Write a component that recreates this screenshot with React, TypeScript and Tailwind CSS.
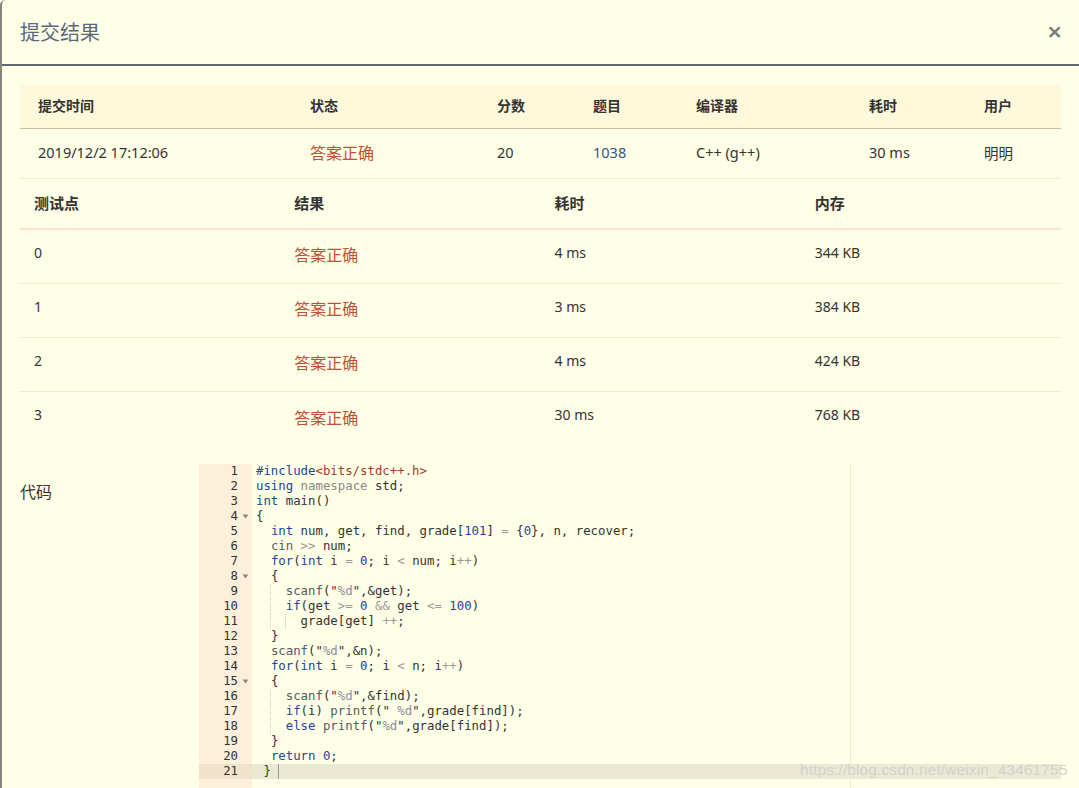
import React from 'react';

const CH = 7.43;

const codeLines = [
  '#include<bits/stdc++.h>',
  'using namespace std;',
  'int main()',
  '{',
  '  int num, get, find, grade[101] = {0}, n, recover;',
  '  cin >> num;',
  '  for(int i = 0; i < num; i++)',
  '  {',
  '    scanf("%d",&get);',
  '    if(get >= 0 && get <= 100)',
  '      grade[get] ++;',
  '  }',
  '  scanf("%d",&n);',
  '  for(int i = 0; i < n; i++)',
  '  {',
  '    scanf("%d",&find);',
  '    if(i) printf(" %d",grade[find]);',
  '    else printf("%d",grade[find]);',
  '  }',
  '  return 0;',
  ' } ',
];

const folds = [4, 8, 15];

const TOKEN =
  /(#include)|(<bits\/stdc\+\+\.h>)|("[^"]*")|\b(int|for|if|else|return|using)\b|\b(namespace)\b|\b(scanf|printf|cin)\b|\b(\d+)\b|(>>|>=|<=|&&|\+\+|=|<)|([^\s"]+?(?=[\s"#<>=&+]|$|\b)|\s+|.)/g;

function renderLine(line: string) {
  const out: React.ReactNode[] = [];
  let m: RegExpExecArray | null;
  let k = 0;
  TOKEN.lastIndex = 0;
  while ((m = TOKEN.exec(line)) !== null) {
    if (m[0] === '') {
      TOKEN.lastIndex++;
      continue;
    }
    const t = m[0];
    if (m[1] || m[4]) out.push(<span key={k++} className="text-[#23449b]">{t}</span>);
    else if (m[2]) out.push(<span key={k++} className="text-[#a33c2c]">{t}</span>);
    else if (m[3]) {
      out.push(
        <span key={k++}>
          "<span className="text-[#8d8da0]">{t.slice(1, -1)}</span>"
        </span>
      );
    } else if (m[5]) out.push(<span key={k++} className="text-[#8a8a8a]">{t}</span>);
    else if (m[6]) out.push(<span key={k++} className="text-[#555a63]">{t}</span>);
    else if (m[7]) out.push(<span key={k++} className="text-[#2c3aa6]">{t}</span>);
    else if (m[8]) out.push(<span key={k++} className="text-[#9a9a9a]">{t}</span>);
    else out.push(<span key={k++}>{t}</span>);
  }
  return out;
}

function guides(line: string) {
  const indent = line.length - line.trimStart().length;
  const g: number[] = [];
  for (let c = 2; c <= indent - 2; c += 2) g.push(c);
  return g;
}

function FoldArrow() {
  return (
    <svg width="7" height="5" viewBox="0 0 7 5" className="absolute right-[3px] top-[5px]">
      <path d="M0.5 0.5 L6.5 0.5 L3.5 4.5 Z" fill="#8c8c8c" />
    </svg>
  );
}

export default function App() {
  const summaryCols = ['提交时间', '状态', '分数', '题目', '编译器', '耗时', '用户'];
  const cases = [
    { id: 0, time: '4 ms', mem: '344 KB' },
    { id: 1, time: '3 ms', mem: '384 KB' },
    { id: 2, time: '4 ms', mem: '424 KB' },
    { id: 3, time: '30 ms', mem: '768 KB' },
  ];

  return (
    <div className="relative w-[1079px] h-[788px] overflow-hidden bg-[#fffee6] border-l-2 border-[#85857c] rounded-tl-[5px] text-[#333] font-['Noto_Sans','Noto_Sans_CJK_SC',sans-serif]">
      {/* header */}
      <div className="flex items-center justify-between h-[66px] pl-[18px] pr-[17px] border-b-2 border-[#5d6a70]">
        <h4 className="text-[20px] text-[#5a6a7e] font-['Noto_Sans_CJK_SC',sans-serif] leading-none mb-[1px]">提交结果</h4>
        <span className="text-[26px] leading-none font-semibold text-[#7c7c7c] mb-[3px]">×</span>
      </div>

      <div className="pl-[18px] pr-[18px] pt-[19px]">
        {/* summary table */}
        <div className="grid grid-cols-[272px_187px_96px_103px_173px_115px_1fr]">
          {summaryCols.map((c) => (
            <div key={c} className="h-[44px] flex items-center pl-[18px] pb-[2px] bg-[#fdf9da] border-b border-[#c9bb9d] text-[14px] font-bold font-['Noto_Sans_CJK_SC',sans-serif]">
              {c}
            </div>
          ))}
          <div className="h-[50px] flex items-center pl-[18px] pb-[2px] border-b border-[#f5ead0] text-[14.5px]">2019/12/2 17:12:06</div>
          <div className="h-[50px] flex items-center pl-[18px] pb-[3px] border-b border-[#f5ead0] text-[16px] text-[#c0503a] font-['Noto_Sans_CJK_SC',sans-serif]">答案正确</div>
          <div className="h-[50px] flex items-center pl-[18px] pb-[2px] border-b border-[#f5ead0] text-[14.5px]">20</div>
          <div className="h-[50px] flex items-center pl-[18px] pb-[2px] border-b border-[#f5ead0] text-[14.5px] text-[#39557a]">1038</div>
          <div className="h-[50px] flex items-center pl-[18px] pb-[2px] border-b border-[#f5ead0] text-[14.5px]">C++ (g++)</div>
          <div className="h-[50px] flex items-center pl-[18px] pb-[2px] border-b border-[#f5ead0] text-[14.5px]">30 ms</div>
          <div className="h-[50px] flex items-center pl-[18px] pb-[2px] border-b border-[#f5ead0] text-[14.5px] font-['Noto_Sans_CJK_SC',sans-serif]">明明</div>
        </div>

        {/* test cases */}
        <div className="grid grid-cols-4">
          {['测试点', '结果', '耗时', '内存'].map((c) => (
            <div key={c} className="h-[51px] flex items-center pl-[14px] border-b-2 border-[#f8e3c9] text-[15px] font-bold font-['Noto_Sans_CJK_SC',sans-serif]">
              {c}
            </div>
          ))}
          {cases.map((r, i) => {
            const b = i < cases.length - 1 ? 'border-b border-[#f1e9cf]' : '';
            return (
              <React.Fragment key={r.id}>
                <div className={`h-[54px] flex items-center pl-[14px] pb-[9px] text-[14px] ${b}`}>{r.id}</div>
                <div className={`h-[54px] flex items-center pl-[14px] pb-[5px] text-[16px] text-[#c0503a] font-['Noto_Sans_CJK_SC',sans-serif] ${b}`}>答案正确</div>
                <div className={`h-[54px] flex items-center pl-[14px] pb-[9px] text-[14px] ${b}`}>{r.time}</div>
                <div className={`h-[54px] flex items-center pl-[14px] pb-[9px] text-[14px] ${b}`}>{r.mem}</div>
              </React.Fragment>
            );
          })}
        </div>

        {/* code */}
        <div className="flex mt-[18px]">
          <div className="w-[179px] shrink-0 pt-[15px] text-[16px] font-['Noto_Sans_CJK_SC',sans-serif]">代码</div>
          <div className="relative flex flex-1 h-[340px] font-['DejaVu_Sans_Mono',monospace] text-[12.35px] leading-[15px] text-[#333]">
            <div className="w-[53px] shrink-0 bg-[#fcf0da] text-[#333]">
              {codeLines.map((_, i) => (
                <div key={i} className={`relative h-[15px] text-right pr-[14px] ${i === codeLines.length - 1 ? 'bg-[#f1e3c9]' : ''}`}>
                  {i + 1}
                  {folds.includes(i + 1) && <FoldArrow />}
                </div>
              ))}
            </div>
            <div className="relative flex-1">
              <div className="absolute top-0 bottom-0 left-[598px] border-l border-[#f1ead0]" />
              {codeLines.map((line, i) => (
                <div key={i} className={`relative h-[15px] pl-[4px] whitespace-pre ${i === codeLines.length - 1 ? 'bg-[#ebe9d4]' : ''}`}>
                  {guides(line).map((c) => (
                    <span
                      key={c}
                      className="absolute top-0 h-[15px] border-l border-dotted border-[#c9c9c0]"
                      style={{ left: 4 + c * CH - 1 }}
                    />
                  ))}
                  {renderLine(line)}
                  {i === codeLines.length - 1 && <span className="inline-block align-top h-[15px] border-l border-[#9a9a9a]" />}
                </div>
              ))}
            </div>
          </div>
        </div>
      </div>

      {/* watermark */}
      <div className="absolute left-[798px] top-[761px] text-[15.5px] leading-[18px] text-[#d2d2cc] font-['Liberation_Sans',sans-serif] tracking-[0.1px]">
        https://blog.csdn.net/weixin_43461755
      </div>
    </div>
  );
}
